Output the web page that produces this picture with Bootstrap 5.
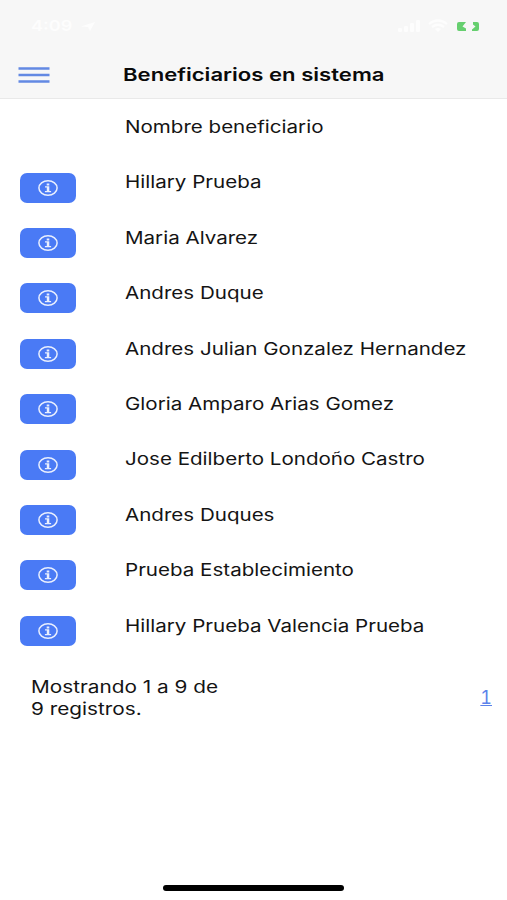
<!DOCTYPE html>
<html lang="es">
<head>
<meta charset="utf-8">
<meta name="viewport" content="width=device-width, initial-scale=1">
<title>Beneficiarios en sistema</title>
<link href="https://cdn.jsdelivr.net/npm/bootstrap@5.3.0/dist/css/bootstrap.min.css" rel="stylesheet">
<style>
body{font-family:Inter,"Liberation Sans",sans-serif;font-size:17px;line-height:22px;color:#141414;background:#fff}
.screen{height:900px}
.topbar{height:99px;background:#f7f7f7;border-bottom:1px solid #e9e9e9}
.status{height:52px;padding:0 26px 0 31px;color:#fdfdfd;font-size:15px}
.title-row{height:46px}
.wide{display:inline-block;transform:scaleX(1.209);transform-origin:0 50%;white-space:nowrap}
.menu-btn{width:32px;height:16px;margin-left:18px}
.heading{margin-left:73px;font-size:17.5px;font-weight:600;line-height:22px;color:#0a0a0a}
.heading .wide{transform:scaleX(1.263)}
.entry{height:55.4px}
.entry .action{width:125px;padding:18.2px 0 0 20px}
.entry .person{padding-top:17px}
.info-btn{width:56px;height:30px;background:#4a7af5;border-radius:7px}
.summary{padding:23px 15px 0 31px}
.summary .wide{transform:scaleX(1.222)}
.page-one{color:#5b82ea;font-size:18px;font-feature-settings:"tnum"}
.page-one:hover{color:#5b82ea}
.home-bar{width:181px;height:6px;background:#000;margin-bottom:9px}
</style>
<script src="https://cdn.jsdelivr.net/npm/bootstrap@5.3.0/dist/js/bootstrap.bundle.min.js"></script>
</head>
<body>
<svg class="d-none">
  <symbol id="info" viewBox="0 0 20 16">
    <ellipse cx="10" cy="8" rx="9.1" ry="7.2" fill="none" stroke="#e9effe" stroke-width="1.5"/>
    <path d="M8.700 3.500h2.600v1.900H8.700zM7 6.300h4.300v4.700h1.800v1.300H6.900V11h1.900V7.600H7z" fill="#e9effe"/>
  </symbol>
</svg>
<div class="screen d-flex flex-column overflow-hidden">
  <header class="topbar flex-shrink-0">
    <div class="status d-flex align-items-center justify-content-between">
      <div class="d-flex align-items-center"><span class="wide fw-semibold">4:09</span>
        <svg class="ms-3" width="15" height="9" viewBox="0 0 15 11" preserveAspectRatio="none"><path d="M0 5.500 14 0 9 11 7 6z" fill="#fdfdfd"/></svg>
      </div>
      <svg width="84" height="16" viewBox="0 0 84 16">
        <g fill="#fdfdfd"><rect x="1" y="10" width="4" height="4" rx="1"/><rect x="7" y="8" width="4" height="6" rx="1"/><rect x="13" y="5" width="4" height="9" rx="1"/><rect x="19" y="2" width="4" height="12" rx="1"/></g>
        <path d="M32 6q9-7 18 0M35 9q6-4.500 12 0" fill="none" stroke="#fdfdfd" stroke-width="2.200"/><path d="m38 11 3 3 3-3q-3-2-6 0z" fill="#fdfdfd"/>
        <path d="M62 4h7L65.500 8.500 69 10.500V13h-7q-2 0-2-2V6q0-2 2-2zM76 4h4q2 0 2 2v5q0 2-2 2h-5v-1.500L78.500 8.500 76 6.500z" fill="#66cf6f"/>
      </svg>
    </div>
    <div class="title-row d-flex align-items-center">
      <svg class="menu-btn" viewBox="0 0 32 16" role="img" aria-label="Menú"><path d="M.5 1.500h31M.5 8h31M.5 14.500h31" stroke="#6389e3" stroke-width="2.400"/></svg>
      <h1 class="heading mb-0"><span class="wide">Beneficiarios en sistema</span></h1>
    </div>
  </header>
  <main class="flex-grow-1">
    <div class="entry d-flex"><div class="action"></div><div class="person"><span class="wide">Nombre beneficiario</span></div></div>
    <div id="people"></div>
    <div class="summary d-flex justify-content-between align-items-center">
      <div><span class="wide">Mostrando 1 a 9 de<br>9 registros.</span></div>
      <a class="page-one text-decoration-underline" href="#">1</a>
    </div>
  </main>
  <div class="home-bar rounded-pill align-self-center flex-shrink-0"></div>
</div>
<script>
const people=["Hillary Prueba","Maria Alvarez","Andres Duque","Andres Julian Gonzalez Hernandez","Gloria Amparo Arias Gomez","Jose Edilberto Londoño Castro","Andres Duques","Prueba Establecimiento","Hillary Prueba Valencia Prueba"];
document.getElementById("people").innerHTML=people.map(n=>`<div class="entry d-flex"><div class="action"><button class="info-btn btn p-0 border-0 d-flex align-items-center justify-content-center" aria-label="Información"><svg width="20" height="16"><use href="#info"/></svg></button></div><div class="person"><span class="wide">${n}</span></div></div>`).join("");
</script>
</body>
</html>
